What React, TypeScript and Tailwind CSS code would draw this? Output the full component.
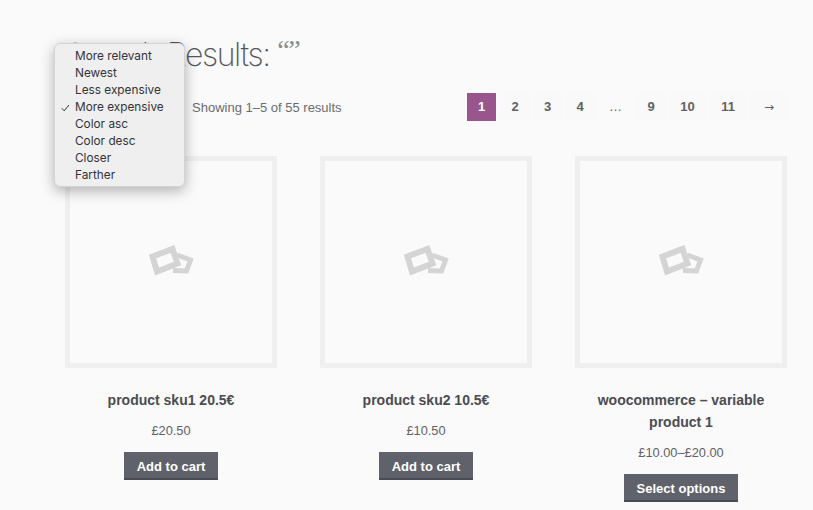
import React from "react";

const menu = ["More relevant", "Newest", "Less expensive", "More expensive", "Color asc", "Color desc", "Closer", "Farther"];

function Placeholder() {
  return (
    <div className="w-[212px] h-[212px] border-[5px] border-[#efefef] flex items-center justify-center">
      <svg width="48" height="40" viewBox="0 0 48 40" className="blur-[0.7px]">
        <g fill="none" stroke="#d4d4d4" strokeLinejoin="miter">
          <path d="M30 13 L43.5 18 L39.5 29 L26 28.5" strokeWidth="5" />
          <path d="M5.5 14.5 L25.5 7 L30.5 21.5 L10 29.5 Z" strokeWidth="6" fill="#fafafa" />
        </g>
      </svg>
    </div>
  );
}

function Card({ title, price, button }: { title: React.ReactNode; price: string; button: string }) {
  return (
    <div className="w-[212px] flex flex-col items-center">
      <Placeholder />
      <h2 className="mt-[21px] text-[14px] leading-[22px] font-bold text-[#4b4c52] text-center">{title}</h2>
      <p className="mt-[9px] text-[12.8px] leading-[22px] text-[#5f6166]">{price}</p>
      <button className="mt-[10px] h-[28px] px-[13px] pt-[3px] bg-[#5f626b] border-b-2 border-[#4a4c54] text-white text-[13px] font-bold leading-none">
        {button}
      </button>
    </div>
  );
}

export default function App() {
  return (
    <div className="relative w-[813px] h-[510px] overflow-hidden bg-[#fafafa] font-['Liberation_Sans',Arial,sans-serif]">
      <div className="pl-[65px] pr-[26px] pt-[34px]">
        <h1 className="h-[42px] font-['Inter',sans-serif] font-extralight text-[32px] leading-[42px] tracking-[-1.4px] text-[#55575c]">
          Search Results: <span className="font-['Liberation_Serif',serif] text-[28px] leading-none align-[7px] font-normal text-[#8a8c90]">“”</span>
        </h1>
        <div className="mt-[16px] h-[29px] flex items-center justify-between">
          <p className="ml-[127px] mt-[2px] text-[13px] text-[#6a6c71]">Showing 1–5 of 55 results</p>
          <nav className="flex items-center gap-[5.5px] text-[13px] font-bold text-[#5f6166]">
            <span className="w-[29px] h-[28px] flex items-center justify-center bg-[#98568c] text-white">1</span>
            {["2", "3", "4"].map((p) => (
              <span key={p} className="w-[27px] h-[27px] flex items-center justify-center bg-[#f9f9f9]">{p}</span>
            ))}
            <span className="w-[33px] h-[27px] flex items-center justify-center font-normal">…</span>
            <span className="w-[27px] h-[27px] flex items-center justify-center bg-[#f9f9f9]">9</span>
            {["10", "11"].map((p) => (
              <span key={p} className="w-[35px] h-[27px] flex items-center justify-center bg-[#f9f9f9]">{p}</span>
            ))}
            <span className="w-[36px] h-[27px] flex items-center justify-center bg-[#f9f9f9] font-['DejaVu_Sans',sans-serif] font-normal text-[12px]">→</span>
          </nav>
        </div>
        <div className="mt-[35px] flex gap-[43px]">
          <Card title="product sku1 20.5€" price="£20.50" button="Add to cart" />
          <Card title="product sku2 10.5€" price="£10.50" button="Add to cart" />
          <Card title={<>woocommerce – variable<br />product 1</>} price="£10.00–£20.00" button="Select options" />
        </div>
      </div>
      <ul className="absolute left-[54px] top-[43px] w-[131px] h-[144px] pt-[3.5px] rounded-[6px] bg-[#efefef] border border-[#d4d4d4] shadow-[0_4px_14px_rgba(0,0,0,0.3)] font-['Inter',sans-serif] text-[11.8px] leading-[17px] text-[#333438]">
        {menu.map((m) => (
          <li key={m} className="relative pl-[20px]">
            {m === "More expensive" && (
              <svg className="absolute left-[6px] top-[5px]" width="9" height="8" viewBox="0 0 9 8" fill="none">
                <path d="M0.8 4.3 L3.2 6.8 L8 1" stroke="#333" strokeWidth="1" />
              </svg>
            )}
            {m}
          </li>
        ))}
      </ul>
    </div>
  );
}
